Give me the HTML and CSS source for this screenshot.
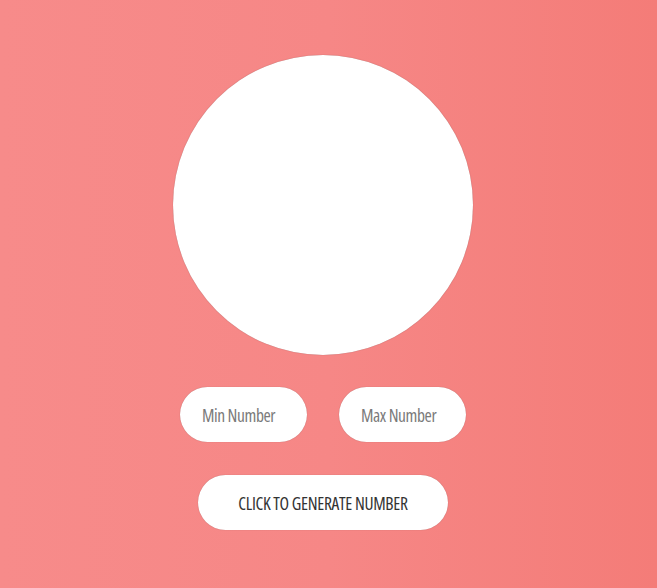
FILE: index.html
```html
<!DOCTYPE html>
<html>
<head>
<meta charset="utf-8">
<link rel="stylesheet" href="styles.css">
</head>
<body>
<main class="app">
  <div class="ball"></div>
  <div class="inputs">
    <input class="field" type="text" placeholder="Min Number">
    <input class="field" type="text" placeholder="Max Number">
  </div>
  <button class="generate">CLICK TO GENERATE NUMBER</button>
</main>
</body>
</html>
```
FILE: styles.css
```css
html, body {
  margin: 0;
  padding: 0;
  height: 100%;
}
body {
  background: linear-gradient(90deg, #f78b8a 0%, #f68786 50%, #f47c78 100%);
  font-family: "Open Sans", sans-serif;
  font-stretch: 75%;
}
.app {
  display: flex;
  flex-direction: column;
  align-items: center;
  padding-top: 55px;
  padding-right: 11px;
}
.ball {
  width: 300px;
  height: 300px;
  border-radius: 50%;
  background: #fff;
  box-shadow: 0 0 1px rgba(0,0,0,0.35);
}
.inputs {
  display: flex;
  gap: 32px;
  margin-top: 32px;
}
.field {
  width: 127px;
  height: 55px;
  box-sizing: border-box;
  border: none;
  border-radius: 28px;
  background: #fff;
  padding: 0 0 0 22px;
  font-family: inherit;
  font-stretch: 75%;
  font-size: 17.5px;
  font-weight: 500;
  letter-spacing: -0.4px;
  color: #333;
  outline: none;
  box-shadow: 0 0 1px rgba(0,0,0,0.3);
}
.field::placeholder {
  color: #7a7a7a;
}
.generate {
  margin-top: 33px;
  width: 250px;
  height: 55px;
  padding: 0;
  border: none;
  border-radius: 28px;
  background: #fff;
  font-family: inherit;
  font-stretch: 75%;
  font-size: 17.5px;
  font-weight: 500;
  letter-spacing: -0.3px;
  color: #333;
  box-shadow: 0 0 1px rgba(0,0,0,0.3);
  cursor: pointer;
}
```
